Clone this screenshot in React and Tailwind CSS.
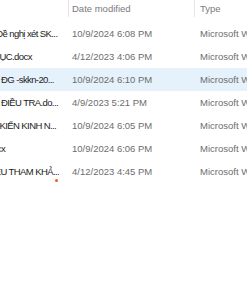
const files = [
  { name: 'Phiếu Đề nghị xét SK...', date: '10/9/2024 6:08 PM' },
  { name: 'MỤC LỤC.docx', date: '4/12/2023 4:06 PM' },
  { name: 'PHIẾU ĐG -skkn-20...', date: '10/9/2024 6:10 PM', selected: true },
  { name: 'PHIẾU ĐIỀU TRA.do...', date: '4/9/2023 5:21 PM' },
  { name: 'SÁNG KIẾN KINH N...', date: '10/9/2024 6:05 PM' },
  { name: 'Bìa.docx', date: '10/9/2024 6:06 PM' },
  { name: 'TÀI LIỆU THAM KHẢ...', date: '4/12/2023 4:45 PM' },
];

export default function App() {
  return (
    <div
      className="w-[247px] h-[296px] overflow-hidden bg-white text-[9.5px] leading-[14px]"
      style={{ fontFamily: '"Liberation Sans", Arial, sans-serif' }}
    >
      {/* Column headers */}
      <div className="grid grid-cols-[68px_126px_1fr] h-[22px]">
        <div />
        <div className="border-l border-[#e5e5e5] h-[17px] flex items-center pl-[3px] text-[#7a7a7a] whitespace-nowrap">
          Date modified
        </div>
        <div className="border-l border-[#e5e5e5] h-[17px] flex items-center pl-[5px] text-[#7a7a7a] whitespace-nowrap">
          Type
        </div>
      </div>

      {/* Rows */}
      <div className="relative">
        {files.map((f) => (
          <div
            key={f.name}
            className={`grid grid-cols-[68px_126px_1fr] h-[23px] items-center ${f.selected ? 'bg-[#e5f1fb]' : ''}`}
          >
            <div className="overflow-hidden">
              <div className="ml-[-27px] whitespace-nowrap tracking-[-0.6px] text-[#1b1b1b]">{f.name}</div>
            </div>
            <div className="pl-[4px] whitespace-nowrap text-[#6d6d6d]">{f.date}</div>
            <div className="pl-[6px] whitespace-nowrap overflow-hidden text-[#6d6d6d]">Microsoft Word Document</div>
          </div>
        ))}
        {/* stray orange dot */}
        <span className="absolute left-[55px] top-[157px] w-[3px] h-[3px] rounded-full bg-[#f25a1f]" />
      </div>
    </div>
  );
}
